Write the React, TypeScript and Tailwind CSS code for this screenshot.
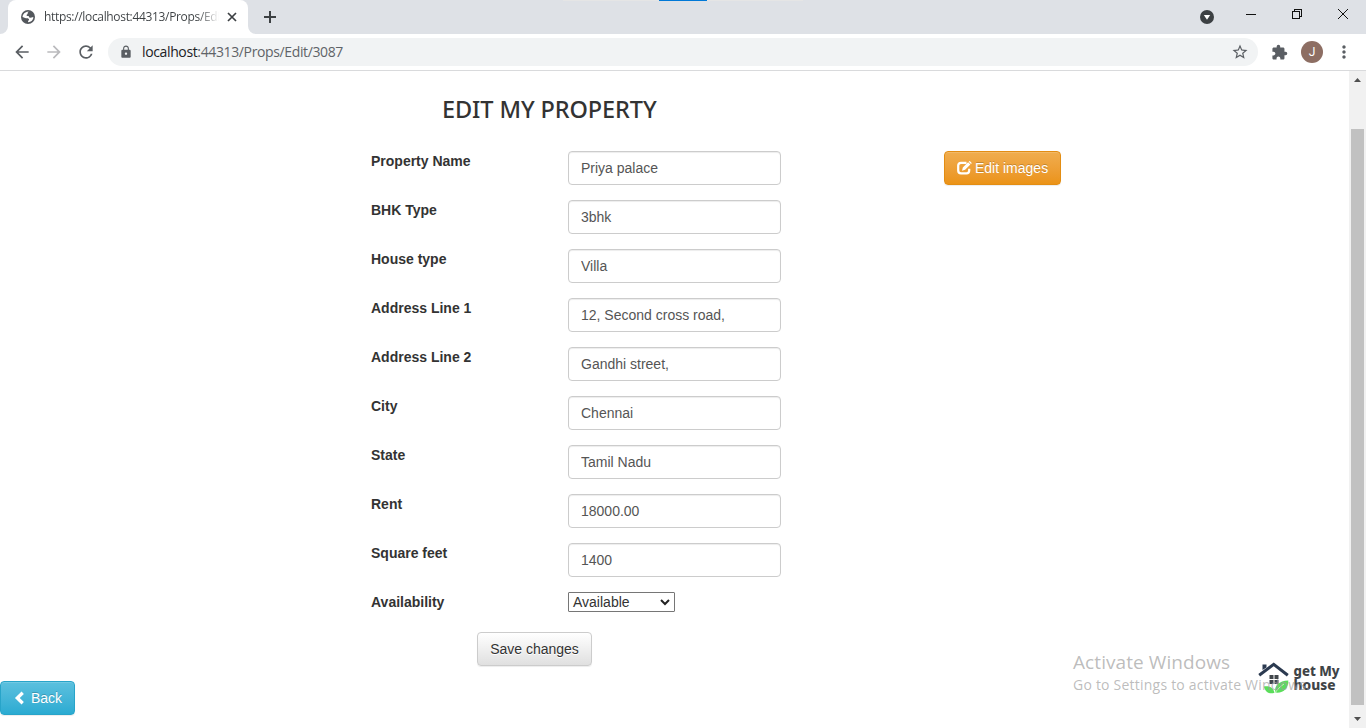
import React from "react";
import {
  MdArrowBack, MdArrowForward, MdRefresh, MdLock, MdStarBorder, MdExtension, MdMoreVert,
} from "react-icons/md";

const fields = [
  { label: "Property Name", value: "Priya palace" },
  { label: "BHK Type", value: "3bhk" },
  { label: "House type", value: "Villa" },
  { label: "Address Line 1", value: "12, Second cross road," },
  { label: "Address Line 2", value: "Gandhi street," },
  { label: "City", value: "Chennai" },
  { label: "State", value: "Tamil Nadu" },
  { label: "Rent", value: "18000.00" },
  { label: "Square feet", value: "1400" },
];

function GlobeIcon() {
  return (
    <svg width="14" height="14" viewBox="0 0 14 14" className="shrink-0">
      <circle cx="7" cy="7" r="7" fill="#54585d" />
      <path d="M8.2 1.7C7 2 6.3 2.6 6.700 3.600 7 4.400 5.700 4.300 5.600 5.200c-.1.8 1 .7 2 .7 1.100 1.600 0 1.500.8 1.700.8.2 2.200.1 3.900-.6.2 2.800-2.200 5.200-5.300 5.200.1-1 .1-1.700 1-2.300.2-1.200-.9-1.500-1.900-1.600C4.700 8.200 3.500 7.600 1.600 6.900 1.600 4 4.300 1.300 8.200 1.700z" fill="#fff" />
    </svg>
  );
}

function TitleBar() {
  return (
    <div className="relative flex h-[34px] bg-[#dee1e6] pl-2">
      <div className="relative flex h-[34px] w-[240px] items-center rounded-t-[8px] bg-white pl-[13px]">
        <GlobeIcon />
        <div className="ml-[9px] w-[175px] overflow-hidden whitespace-nowrap bg-gradient-to-r from-[#3c4043] from-[88%] to-transparent bg-clip-text font-['Open_Sans','Noto_Sans',sans-serif] text-[12px] leading-[16px] tracking-[-0.33px] text-transparent">
          https://localhost:44313/Props/Edit
        </div>
        <svg className="ml-[8px] shrink-0" width="10" height="10" viewBox="0 0 10 10">
          <path d="M1 1l8 8M9 1L1 9" stroke="#3c4043" strokeWidth="1.700" />
        </svg>
        <svg className="absolute -left-2 bottom-0" width="8" height="8"><path d="M8 0v8H0a8 8 0 0 0 8-8z" fill="#fff" /></svg>
        <svg className="absolute -right-2 bottom-0" width="8" height="8"><path d="M0 0v8h8a8 8 0 0 1-8-8z" fill="#fff" /></svg>
      </div>
      <svg className="ml-[16px] mt-[11px]" width="12" height="12" viewBox="0 0 12 12">
        <path d="M6 0v12M0 6h12" stroke="#3c4043" strokeWidth="2" />
      </svg>
      <div className="absolute left-[563px] top-0 flex h-px w-[240px] bg-[#e5e5e5]">
        <div className="ml-24 h-px w-12 bg-[#0078d7]" />
      </div>
      <div className="ml-auto flex">
        <svg className="mr-[32px] mt-[10px]" width="14" height="14" viewBox="0 0 14 14">
          <circle cx="7" cy="7" r="7" fill="#3c4043" /><path d="M3.800 5h6.400L7 9.800z" fill="#fff" />
        </svg>
        <svg width="120" height="34" viewBox="0 0 120 34" fill="none" stroke="#111" shapeRendering="crispEdges">
          <path d="M0 14.500h10M46.500 11.500h7v7h-7zM48.500 11V9.500h7v7H54" />
          <path d="M92 9l10 10M102 9L92 19" shapeRendering="auto" />
        </svg>
      </div>
    </div>
  );
}

function Toolbar() {
  return (
    <div className="flex h-[37px] items-center border-b border-[#d9dadc] bg-white pl-[12px] text-[#5a5e63]">
      <MdArrowBack size={20} />
      <MdArrowForward className="ml-3 text-[#bababd]" size={20} />
      <MdRefresh className="ml-3" size={20} />
      <div className="ml-[12px] flex h-7 w-[1150px] items-center rounded-full bg-[#f1f3f4] pl-[11px]">
        <MdLock size={14} />
        <div className="ml-[9px] whitespace-nowrap font-['Open_Sans','Noto_Sans',sans-serif] text-[14px] leading-5 tracking-[-0.37px] text-[#5f6368]">
          <span className="text-[#202124]">localhost</span>:44313/Props/Edit/3087
        </div>
        <MdStarBorder className="ml-auto mr-[9px]" size={18} />
      </div>
      <MdExtension className="ml-[13px]" size={17} />
      <div className="ml-[13px] flex h-[22px] w-[22px] items-center justify-center rounded-full bg-[#8d6e63] font-['Roboto',sans-serif] text-[12px] text-white">J</div>
      <MdMoreVert className="ml-[11px]" size={20} />
    </div>
  );
}

function Logo() {
  return (
    <svg width="84" height="38" viewBox="0 0 84 38">
      <path d="M5.500 12V6.500h4v3" fill="#2b3a50" />
      <path d="M2.200 17.300L16.700 6.300 30.800 17.300" fill="none" stroke="#2b3a50" strokeWidth="3" />
      <g fill="#41464b">
        <path d="M12.500 17h4v4h-4zM17.500 17h4v4h-4zM12.500 22h4v4h-4zM17.500 22h4v4h-4z" />
      </g>
      <path d="M6.800 28.500c5-.8 9.500.5 10.700 6.300-5 1.500-9-.3-10.700-6.300z" fill="#5bdd5b" />
      <path d="M18.300 34.600C17 27.500 22 23 31.300 22.500 31.500 30.500 26.500 35.500 18.300 34.600z" fill="#5bdd5b" />
      <path d="M18.300 34.500C20.500 31.500 23 28.500 27 26" stroke="#d8f7d8" strokeWidth=".8" fill="none" />
      <g fill="#3f4447" className="font-['Noto_Sans',sans-serif] text-[13.500px] font-extrabold">
        <text x="36.500" y="18" textLength="46" lengthAdjust="spacingAndGlyphs">get My</text>
        <text x="36.500" y="31.500" textLength="42" lengthAdjust="spacingAndGlyphs">house</text>
      </g>
    </svg>
  );
}

function Page() {
  return (
    <div className="relative flex-1 overflow-hidden bg-white font-['Liberation_Sans',Arial,sans-serif] text-[14px] leading-5 text-[#333]">
      <h1 className="ml-[442px] mt-[23px] h-[30px] whitespace-nowrap font-['Noto_Sans','Open_Sans',sans-serif] text-[23.500px] font-medium leading-[30px] tracking-[-0.1px]">
        EDIT MY PROPERTY
      </h1>
      <div className="ml-[371px] mt-[27px] flex items-start">
        <div className="w-[410px]">
          {fields.map((f) => (
            <div key={f.label} className="mb-[15px] flex">
              <label className="w-[197px] font-bold">{f.label}</label>
              <input
                readOnly
                value={f.value}
                className="h-[34px] w-[213px] rounded-[4px] border border-[#ccc] bg-white px-3 text-[14px] text-[#555] shadow-[inset_0_1px_1px_rgba(0,0,0,0.075)] outline-none"
              />
            </div>
          ))}
          <div className="flex">
            <label className="w-[197px] font-bold">Availability</label>
            <div className="flex h-5 w-[107px] items-center justify-between rounded-[1px] border border-[#767676] pl-1 pr-[4px]">
              <span>Available</span>
              <svg width="10" height="7" viewBox="0 0 10 7"><path d="M1 1l4 4 4-4" fill="none" stroke="#222" strokeWidth="2" /></svg>
            </div>
          </div>
          <button className="ml-[106px] mt-[20px] flex h-[34px] w-[115px] items-center justify-center rounded-[4px] border border-[#ccc] bg-gradient-to-b from-white to-[#e0e0e0] shadow-[inset_0_1px_0_rgba(255,255,255,0.15),0_1px_1px_rgba(0,0,0,0.075)] [text-shadow:0_1px_0_#fff]">
            Save changes
          </button>
        </div>
        <button className="ml-[163px] flex h-[34px] w-[117px] items-center rounded-[4px] border border-[#e38d13] bg-gradient-to-b from-[#f0ad4e] to-[#eb9316] pl-3 text-white shadow-[inset_0_1px_0_rgba(255,255,255,0.15),0_1px_1px_rgba(0,0,0,0.075)] [text-shadow:0_-1px_0_rgba(0,0,0,0.2)]">
          <svg className="mr-[3px]" width="15" height="14" viewBox="0 0 15 14">
            <path d="M9.500 1.900H4Q1.200 1.900 1.200 4.500v5Q1.200 12.300 4 12.300h5.500q2.700 0 2.700-2.800V7.800" fill="none" stroke="#fff" strokeWidth="2.200" />
            <path d="M5 9.800l.8-3.300 5.300-5.300 2.300 2.300-5.300 5.300zM11.700.7l.5-.5q.4-.3.8 0l1.500 1.500q.3.400 0 .8l-.5.500z" fill="#fff" />
          </svg>
          Edit images
        </button>
      </div>
      <button className="mt-[15px] flex h-[34px] w-[75px] items-center rounded-[4px] border border-[#28a4c9] bg-gradient-to-b from-[#5bc0de] to-[#2aabd2] pl-[13px] text-white shadow-[inset_0_1px_0_rgba(255,255,255,0.15),0_1px_1px_rgba(0,0,0,0.075)] [text-shadow:0_-1px_0_rgba(0,0,0,0.2)]">
        <svg className="mr-[6px]" width="11" height="14" viewBox="0 0 11 14"><path d="M8.700 1.700L3.300 7l5.400 5.300" fill="none" stroke="#fff" strokeWidth="3.300" /></svg>
        Back
      </button>
      <div className="absolute left-[1257px] top-[587px]"><Logo /></div>
      <div className="absolute left-[1073px] top-[578px] whitespace-nowrap font-['Open_Sans','Noto_Sans',sans-serif] text-[#a0a0a0]/70">
        <div className="text-[19px] leading-[26px] tracking-[0.08px]">Activate Windows</div>
        <div className="text-[14px] leading-5 tracking-[0.22px]">Go to Settings to activate Windows.</div>
      </div>
    </div>
  );
}

function ScrollBar() {
  return (
    <div className="flex w-[17px] flex-col items-center bg-[#f1f1f1]">
      <svg className="shrink-0" width="17" height="17"><path d="M5 11h7L8.500 7z" fill="#505050" /></svg>
      <div className="mt-[41px] h-[576px] w-[13px] bg-[#c1c1c1]" />
      <svg className="mt-auto shrink-0" width="17" height="17"><path d="M5 6h7l-3.500 4z" fill="#505050" /></svg>
    </div>
  );
}

export default function App() {
  return (
    <div className="flex h-[728px] w-[1366px] flex-col overflow-hidden bg-white">
      <TitleBar />
      <Toolbar />
      <div className="flex min-h-0 flex-1">
        <Page />
        <ScrollBar />
      </div>
    </div>
  );
}
